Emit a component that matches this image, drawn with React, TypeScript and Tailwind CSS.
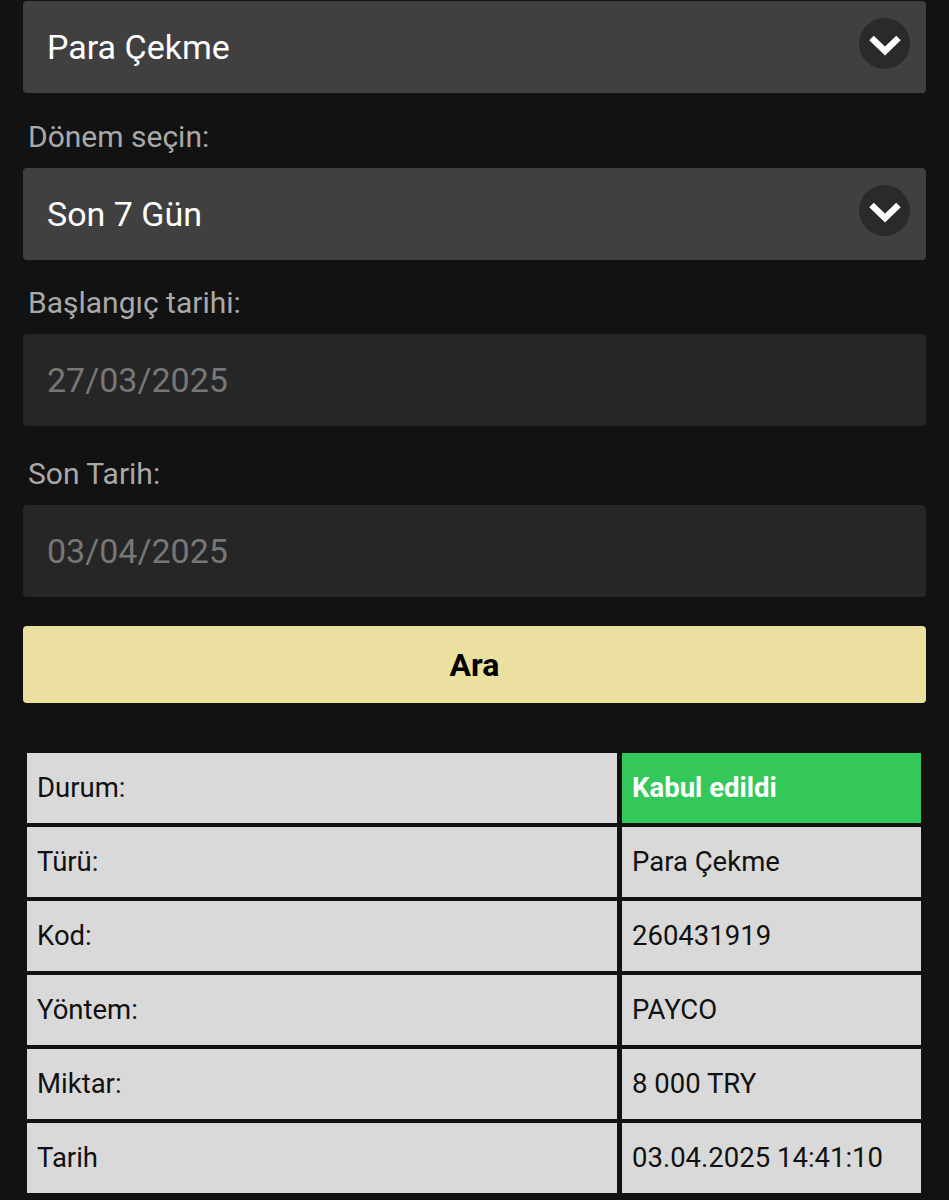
const FONT = "font-['Roboto','Liberation_Sans',sans-serif]";

const ROWS: { label: string; value: string; ok?: boolean }[] = [
  { label: "Durum:", value: "Kabul edildi", ok: true },
  { label: "Türü:", value: "Para Çekme" },
  { label: "Kod:", value: "260431919" },
  { label: "Yöntem:", value: "PAYCO" },
  { label: "Miktar:", value: "8 000 TRY" },
  { label: "Tarih", value: "03.04.2025 14:41:10" },
];

function Chevron() {
  return (
    <span className="mb-[8px] flex h-[51px] w-[51px] items-center justify-center rounded-full bg-[#2a2a2a]">
      <svg width="32" height="22" viewBox="0 0 32 22" className="mt-[3px]">
        <path d="M2.5 4 L16 17 L29.5 4" fill="none" stroke="#fff" strokeWidth="6.5" strokeLinejoin="miter" />
      </svg>
    </span>
  );
}

function Select({ value }: { value: string }) {
  return (
    <div className="flex h-[92px] items-center justify-between rounded-[4px] bg-[#404040] pl-6 pr-4">
      <span className="text-[34px] text-white">{value}</span>
      <Chevron />
    </div>
  );
}

// label block fills the whole gap between two fields
function Label({ text, h, top }: { text: string; h: string; top: string }) {
  return (
    <div className={`${h} ${top} px-[5px] text-[30px] leading-none text-[#a9a9a9]`}>{text}</div>
  );
}

function DateInput({ value }: { value: string }) {
  return (
    <div className="flex h-[92px] items-center rounded-[4px] bg-[#262626] pl-6">
      <span className="text-[34px] text-[#777]">{value}</span>
    </div>
  );
}

export default function App() {
  return (
    <div className={`${FONT} min-h-[1200px] bg-[#121212] px-[23px] pt-[1px]`}>
      <Select value="Para Çekme" />
      <Label text="Dönem seçin:" h="h-[75px]" top="pt-[29px]" />
      <Select value="Son 7 Gün" />
      <Label text="Başlangıç tarihi:" h="h-[74px]" top="pt-[28px]" />
      <DateInput value="27/03/2025" />
      <Label text="Son Tarih:" h="h-[79px]" top="pt-[33px]" />
      <DateInput value="03/04/2025" />
      <button className="mt-[29px] flex h-[77px] w-full items-center justify-center rounded-[4px] bg-[#ebe0a0] text-[32px] font-bold text-black">
        Ara
      </button>
      <div className="mt-[46px] grid grid-cols-[590px_299px] gap-x-[5px] gap-y-[4px] p-[4px]">
        {ROWS.map((r) => (
          <>
            <div key={r.label} className="flex h-[70px] items-center bg-[#d9d9d9] pl-[10px] text-[27.5px] text-[#111]">
              {r.label}
            </div>
            <div
              key={r.label + "-v"}
              className={
                r.ok
                  ? "flex h-[70px] items-center bg-[#34c85a] pl-[10px] text-[27.5px] font-bold text-white"
                  : "flex h-[70px] items-center bg-[#d9d9d9] pl-[10px] text-[27.5px] text-[#111]"
              }
            >
              {r.value}
            </div>
          </>
        ))}
      </div>
    </div>
  );
}
